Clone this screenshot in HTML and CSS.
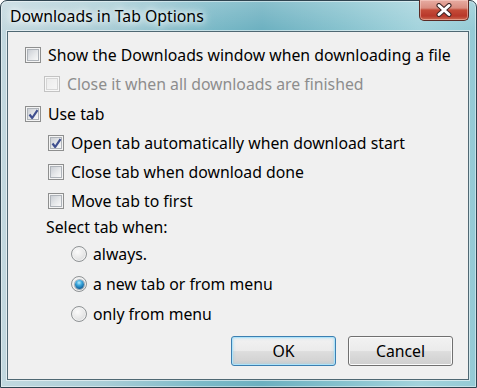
FILE: index.html
```html
<!DOCTYPE html>
<html>
<head>
<meta charset="utf-8">
<link rel="stylesheet" href="styles.css">
</head>
<body>
<div class="window">
  <div class="titlebar">
    <span class="title">Downloads in Tab Options</span>
    <span class="close">
      <svg width="16" height="14" viewBox="0 0 16 14">
        <path d="M3 2.5 L13 11.5 M13 2.5 L3 11.5" stroke="#3d2424" stroke-width="5" stroke-linecap="round" fill="none"/>
        <path d="M3 2.5 L13 11.5 M13 2.5 L3 11.5" stroke="#ffffff" stroke-width="3" stroke-linecap="round" fill="none"/>
      </svg>
    </span>
  </div>
  <div class="client">
    <div class="row l0"><span class="cb"></span><span class="txt">Show the Downloads window when downloading a file</span></div>
    <div class="row l1 disabled"><span class="cb"></span><span class="txt">Close it when all downloads are finished</span></div>
    <div class="row l0 r3"><span class="cb"><svg class="tick" width="15" height="15" viewBox="0 0 15 15"><path d="M3.5 7.5 L6.2 11 L11.5 3.2" stroke="#3f4f8f" stroke-width="2.2" fill="none" stroke-linejoin="round"/></svg></span><span class="txt">Use tab</span></div>
    <div class="row l2"><span class="cb"><svg class="tick" width="15" height="15" viewBox="0 0 15 15"><path d="M3.5 7.5 L6.2 11 L11.5 3.2" stroke="#3f4f8f" stroke-width="2.2" fill="none" stroke-linejoin="round"/></svg></span><span class="txt">Open tab automatically when download start</span></div>
    <div class="row l2"><span class="cb"></span><span class="txt">Close tab when download done</span></div>
    <div class="row l2"><span class="cb"></span><span class="txt">Move tab to first</span></div>
    <div class="label">Select tab when:</div>
    <div class="row rrow"><span class="rb"></span><span class="txt">always.</span></div>
    <div class="row rrow"><span class="rb on"><span class="dot"></span></span><span class="txt">a new tab or from menu</span></div>
    <div class="row rrow"><span class="rb"></span><span class="txt">only from menu</span></div>
    <div class="buttons">
      <button class="btn default">OK</button>
      <button class="btn">Cancel</button>
    </div>
  </div>
</div>
</body>
</html>
```

FILE: styles.css
```css
html, body {
  margin: 0;
  padding: 0;
  background: #ffffff;
}
body {
  width: 477px;
  height: 388px;
  font-family: "Noto Sans", "Open Sans", sans-serif;
  font-size: 15.8px;
  color: #000;
}
.window {
  box-sizing: border-box;
  width: 477px;
  height: 388px;
  border: 1px solid #2f4450;
  border-radius: 7px 7px 0 0;
  background:
    linear-gradient(to bottom, rgba(255,255,255,0.2) 0px, rgba(255,255,255,0) 30px),
    linear-gradient(to right, #c2d8df 0%, #a9cdd6 22%, #7cbac8 42%, #6cb0c0 55%, #86c2ce 72%, #a3d3dc 88%, #94cad5 100%);
  padding: 0 7px 7px 6px;
  display: flex;
  flex-direction: column;
  box-shadow: inset 0 0 0 1px rgba(255,255,255,0.45);
}
.titlebar {
  height: 30px;
  display: flex;
  justify-content: space-between;
  align-items: flex-start;
  flex: none;
}
.title {
  padding: 5px 0 0 3px;
  line-height: 20px;
  text-shadow: 0 0 6px #ffffff, 0 0 10px rgba(255,255,255,0.9), 0 0 14px rgba(255,255,255,0.8);
  color: #000;
}
.close {
  margin-top: -1px;
  width: 50px;
  height: 21px;
  box-sizing: border-box;
  border: 1px solid #5b2a24;
  border-top: none;
  border-radius: 0 0 5px 5px;
  background: linear-gradient(to bottom, #e7aca2 0%, #d98d80 40%, #c44b38 50%, #b8382a 80%, #cc6a52 100%);
  box-shadow: inset 0 0 0 1px rgba(255,220,210,0.45);
  display: flex;
  align-items: center;
  justify-content: center;
}
.client {
  flex: 1;
  background: #f0f0f0;
  border: 1px solid #4f6873;
  box-shadow: 0 0 0 1px rgba(255,255,255,0.55);
  padding: 8px 15px 13px 17px;
  display: flex;
  flex-direction: column;
}
.row {
  height: 29px;
  display: flex;
  align-items: center;
  flex: none;
}
.l1 { padding-left: 19px; }
.l2 { padding-left: 23px; }
.r3 { margin-top: 1px; }
.txt {
  margin-left: 7px;
  white-space: nowrap;
}
.disabled .txt { color: #8d8d8d; }
.cb {
  box-sizing: border-box;
  width: 16px;
  height: 16px;
  flex: none;
  border: 1px solid #8e8f8f;
  background: #f4f4f4;
  position: relative;
  box-shadow: inset 0 0 0 1px #f4f4f4, inset 0 0 0 2px #aeb3b9;
}
.cb::before {
  content: "";
  position: absolute;
  left: 2px; top: 2px; right: 2px; bottom: 2px;
  background: linear-gradient(135deg, #cbcfd5 0%, #e6e8ea 55%, #f8f8f8 100%);
}
.disabled .cb {
  border-color: #c3c3c3;
  box-shadow: inset 0 0 0 1px #f7f7f7, inset 0 0 0 2px #d6d6d6;
}
.disabled .cb::before {
  background: linear-gradient(135deg, #ececec 0%, #f6f6f6 100%);
}
.tick {
  position: absolute;
  left: 0;
  top: 0;
}
.label {
  height: 24px;
  line-height: 24px;
  padding-left: 21px;
  flex: none;
}
.rrow {
  height: 30px;
  padding-left: 46px;
}
.rrow .txt { margin-left: 6px; }
.rb {
  box-sizing: border-box;
  width: 16px;
  height: 16px;
  flex: none;
  border-radius: 50%;
  border: 1px solid #8f9395;
  background: radial-gradient(circle at 40% 35%, #fbfbfb 0%, #eaeaea 45%, #cfd1d3 100%);
  box-shadow: inset 0 0 0 1px #f2f2f2;
  display: flex;
  align-items: center;
  justify-content: center;
}
.dot {
  width: 9px;
  height: 9px;
  border-radius: 50%;
  background: radial-gradient(circle at 45% 30%, #b6ecfc 0%, #3aa6dc 35%, #0f5f99 75%, #0a3f6a 100%);
  box-shadow: 0 0 0 1px rgba(20,60,90,0.35);
}
.buttons {
  margin-top: 7px;
  display: flex;
  justify-content: flex-end;
  gap: 12px;
}
.btn {
  box-sizing: border-box;
  width: 105px;
  height: 30px;
  font-family: "Noto Sans", "Open Sans", sans-serif;
  font-size: 15.8px;
  color: #000;
  border: 1px solid #707070;
  border-radius: 3px;
  background: linear-gradient(to bottom, #f2f2f2 0%, #ebebeb 48%, #dddddd 52%, #cfcfcf 100%);
  box-shadow: inset 0 0 0 1px #fbfbfb;
  padding: 0;
}
.btn.default {
  border-color: #3c7fb1;
  box-shadow: inset 0 0 0 1px #aee3f9, inset 0 0 3px 1px rgba(120,200,240,0.5);
}
```
